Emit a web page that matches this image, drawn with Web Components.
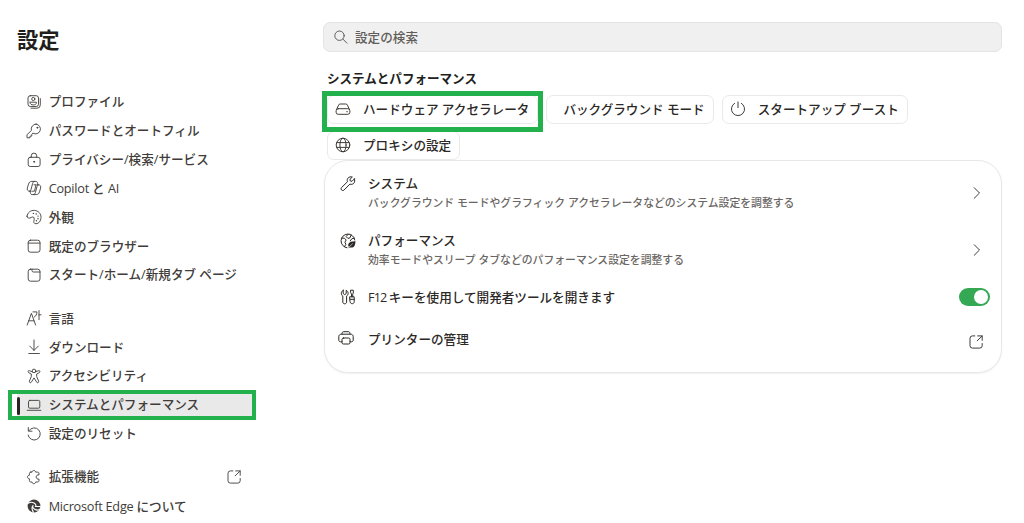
<!DOCTYPE html>
<html lang="ja">
<head>
<meta charset="utf-8">
<title>設定</title>
<style>
  body {
    margin: 0;
    width: 1024px;
    height: 523px;
    overflow: hidden;
    background: #fff;
    color: #2b2826;
    font-family: "Open Sans", "Noto Sans CJK JP", sans-serif;
    font-size: 12.6px;
    font-weight: 500;
  }
</style>
</head>
<body>
<settings-page>
  <settings-nav slot="nav" heading="設定">
    <nav-group>
      <nav-item icon="profile">プロファイル</nav-item>
      <nav-item icon="key">パスワードとオートフィル</nav-item>
      <nav-item icon="lock">プライバシー/検索/サービス</nav-item>
      <nav-item icon="copilot"><latin-text>Copilot</latin-text> と <latin-text>AI</latin-text></nav-item>
      <nav-item icon="palette">外観</nav-item>
      <nav-item icon="browser">既定のブラウザー</nav-item>
      <nav-item icon="tab">スタート/ホーム/新規タブ ページ</nav-item>
    </nav-group>
    <nav-group>
      <nav-item icon="language">言語</nav-item>
      <nav-item icon="download">ダウンロード</nav-item>
      <nav-item icon="access">アクセシビリティ</nav-item>
      <nav-item icon="laptop" selected>システムとパフォーマンス</nav-item>
      <nav-item icon="reset">設定のリセット</nav-item>
    </nav-group>
    <nav-group>
      <nav-item icon="puzzle" external>拡張機能</nav-item>
      <nav-item icon="edge"><latin-text>Microsoft Edge</latin-text> について</nav-item>
    </nav-group>
  </settings-nav>

  <search-box>設定の検索</search-box>
  <chip-list heading="システムとパフォーマンス">
    <link-chip icon="drive" marked>ハードウェア アクセラレータ</link-chip>
    <link-chip>バックグラウンド モード</link-chip>
    <link-chip icon="power">スタートアップ ブースト</link-chip>
    <link-chip icon="globe">プロキシの設定</link-chip>
  </chip-list>
  <settings-card>
    <setting-row icon="wrench" action="chevron">システム<span slot="desc">バックグラウンド モードやグラフィック アクセラレータなどのシステム設定を調整する</span></setting-row>
    <setting-row icon="performance" action="chevron">パフォーマンス<span slot="desc">効率モードやスリープ タブなどのパフォーマンス設定を調整する</span></setting-row>
    <setting-row class="toggle" icon="tools" action="toggle"><latin-text class="tight">F12</latin-text> キーを使用して開発者ツールを開きます</setting-row>
    <setting-row class="printer" icon="printer" action="open">プリンターの管理</setting-row>
  </settings-card>
</settings-page>

<script>
// 16x16 icons, stroked with currentColor
const ICONS = {
  profile: '<rect x="2" y="1.7" width="10.5" height="10.8" rx="2.3"/><circle cx="7.3" cy="5" r="1.6"/><path d="M4.1 8.2h6.3v.7c0 1.3-1.3 2-3.1 2s-3.2-.7-3.2-2zM14.3 4.6v6.3a3.3 3.3 0 0 1-3.3 3.3H5"/>',
  key: '<path d="M10.1 1.1a4.9 4.9 0 0 0-4.7 6.3L1 11.8v3h3v-1.7h1.8v-1.9l1.1-1.1a4.9 4.9 0 1 0 3.2-9z"/><circle cx="11.3" cy="4.7" r=".5" fill="currentColor"/>',
  lock: '<rect x="2.2" y="5.3" width="11.9" height="9.2" rx="2"/><path d="M5.3 5.2V3.8a2.7 2.7 0 0 1 5.4 0v1.4"/><circle cx="8.1" cy="9.8" r=".5" fill="currentColor"/>',
  copilot: '<path d="M5.2 11.2H3.7c-2 0-2.9-1.5-2.3-3.3l1.1-3.7C3 2.4 4 1.4 5.8 1.4h4.1c1.1 0 1.4.7 1.7 1.9l.3 1.5M10.8 4.8h1.5c2 0 2.9 1.5 2.3 3.3l-1.1 3.7c-.5 1.8-1.5 2.8-3.3 2.8H6.1c-1.1 0-1.4-.7-1.7-1.9l-.3-1.5M8.2 1.5c-1 .3-1.3 1-1.6 2L5 9.6c-.3 1-.5 1.6-1.5 1.6M7.8 14.5c1-.3 1.3-1 1.6-2L11 6.4c.3-1 .5-1.6 1.5-1.6M6.5 11.2h2L10 4.8H8"/>',
  palette: '<path d="M1 7.2C1.4 3.6 4.7 1.2 8.4 1.4c3.9.3 6.8 3.3 6.6 7-.2 3.6-2.1 6.3-5.1 6.3-2.2 0-2.4-1.7-1.9-3.3.4-1.7.4-3.3-1.2-3.4-1.1-.1-1.8.8-2.9 1C2.2 9.3.8 8.7 1 7.2z"/><g fill="currentColor" stroke="none"><circle cx="7.4" cy="4.4" r=".7"/><circle cx="10.2" cy="5" r=".7"/><circle cx="12" cy="7.1" r=".7"/><circle cx="12" cy="9.7" r=".7"/><circle cx="10.4" cy="11.8" r=".7"/></g>',
  browser: '<rect x="2.2" y="2.2" width="11.8" height="12" rx="2.3"/><path d="M2.2 5.1H14"/>',
  tab: '<rect x="2.2" y="2.2" width="11.8" height="12" rx="2.3"/><path d="M6 2.2v1.4c0 .9.5 1.4 1.4 1.4H14"/>',
  language: '<path d="M1.2 15L5.4 3.3 9.6 15M2.8 10.8h5.1M7 1.9h3.9c0 2.4-.9 4.1-2.6 5.2M13 .6v9M13 4.8h2"/>',
  download: '<path d="M8 1v10.3M3.7 7.1L8 11.4l4.3-4.3M2.8 14.5h10.6"/>',
  access: '<circle cx="8" cy="2.9" r="1.8"/><path d="M6.2 3.9L3.6 2.7C2.1 2.1 1.3 4 2.7 4.7l2.6 1.3v2.6l-1.9 4.5c-.6 1.5 1.4 2.2 2 1L8 9.9l2.6 4.2c.6 1.2 2.6.5 2-1l-1.9-4.5V6l2.6-1.3c1.4-.7.6-2.6-.9-2L9.8 3.9"/>',
  laptop: '<rect x="2.5" y="3.4" width="11.3" height="7.8" rx="1.3"/><path d="M1.2 13.3h13.6"/>',
  reset: '<path d="M3 4.6A6.1 6.1 0 1 1 2.1 9M2.3 1.5v3.7H6"/>',
  puzzle: '<path d="M4.9 3.1h1.2c.2-1.1.8-1.6 1.7-1.6s1.6.5 1.8 1.6h1.9c1 0 1.5.5 1.5 1.5v1.3c-1.7-.3-2.8.7-2.8 2.1s1.1 2.4 2.8 2.1v1.4c0 1-.5 1.5-1.5 1.5H9.6c-.2 1.2-.9 1.7-1.8 1.7s-1.5-.5-1.7-1.7H4.9c-1 0-1.5-.5-1.5-1.5V9.8C2.2 9.6 1.5 9 1.5 8s.7-1.6 1.9-1.8V4.6c0-1 .5-1.5 1.5-1.5z"/>',
  edge: '<circle cx="8" cy="8" r="6.4" fill="currentColor" stroke="none"/><path d="M1.2 5.9c1.9-1.7 4.7-2 6.8-.9 2 1 2.4 2.7 1.4 3.5h5.2M14.8 10.6c-1.8 1.6-4.5 1.7-6.2.6-1.8-1.1-2.1-2.6-1.6-3.6M6.8 8.2c-1.1.6-1.2 3.3.7 6" stroke="#fff" stroke-width="1.1"/>',
  search: '<circle cx="6.5" cy="6.7" r="4.7"/><path d="M10 10.2l4 4"/>',
  drive: '<path d="M1.6 8.4l2-4.3c.3-.8.8-1.1 1.6-1.1h5.6c.8 0 1.3.3 1.6 1.1l2 4.3"/><rect x="1.1" y="7.7" width="13.8" height="5.6" rx="2.1"/><path d="M11.7 10.7h.6"/>',
  power: '<path d="M8 .9v5.7M4.6 2.3a6.6 6.6 0 1 0 6.8 0"/>',
  globe: '<circle cx="8" cy="8" r="6.8"/><ellipse cx="8" cy="8" rx="3.1" ry="6.8"/><path d="M1.8 5.6h12.4M1.8 10.4h12.4"/>',
  wrench: '<path d="M14.4 2.9L12 5.3l-1.7-.3-.4-1.6 2.4-2.4c-3.2-.9-6 1.5-4.8 4.7L1.6 11.5c-1.7 1.6.8 4.2 2.5 2.5l5.8-5.9c3.4 1.2 5.9-2 4.5-5.2z"/>',
  performance: '<path d="M7 14.8A6.9 6.9 0 1 1 14.8 7M1.8 5.2h2.6L6.2 7 4.9 9.3l1 2-1.4 2.3M8.2 1.2L6.1 3.6l1.8 1.8 2-.5 1.2-2.9M14.2 5.2l-2.3.5-1.6 2.1"/><path d="M15.5 8.2c-3.1-.1-6.4.4-7.1 2.7-.5 1.6.1 2.4.7 3l-.9 1.3 1.5-.8c4.1 1 5.6-1.8 5.8-6.2z" fill="currentColor" stroke="none"/><path d="M9.3 13.8l3.2-3" stroke="#fff" stroke-width=".6"/>',
  tools: '<path d="M3.2 1.3v3.3l1.5 1 1.5-1V1.3c2.6 1.3 2.4 4.6.4 5.8v5.9c0 2.4-3.8 2.4-3.8 0V7.1C.8 5.9.6 2.6 3.2 1.3zM10.9 1.2h2.4v2.9l-.6 1v2.7h-1.2V5.1l-.6-1zM10 7.8h4.2v5c0 2.6-4.2 2.6-4.2 0zM10 10.3h4.2"/>',
  printer: '<path d="M4 4.2v-.6c0-1.1.6-1.9 1.7-1.9h4.6c1.1 0 1.7.8 1.7 1.9v.6M4 11.8H2.6c-1 0-1.8-.7-1.8-1.7V6.6c0-1.4 1-2.4 2.5-2.4h9.4c1.5 0 2.5 1 2.5 2.4v3.5c0 1-.8 1.7-1.8 1.7H12"/><rect x="4" y="8" width="8" height="6" rx="1.4"/>',
  open: '<path d="M6.8 1.9H4.4A2.4 2.4 0 0 0 2 4.3v7.4a2.4 2.4 0 0 0 2.4 2.4h7.4a2.4 2.4 0 0 0 2.4-2.4V9.5M9.7 1.9h4.5v4.4M14.2 1.9L9.2 6.8"/>',
  chevron: '<path d="M6.2 2.7L11.5 8l-5.3 5.3"/>'
};

function icon(name) {
  return `<svg width="16" height="16" viewBox="0 0 16 16" fill="none" stroke="currentColor" stroke-linecap="round" stroke-linejoin="round">${ICONS[name] || ''}</svg>`;
}

function define(name, render) {
  customElements.define(name, class extends HTMLElement {
    constructor() {
      super();
      this.attachShadow({ mode: 'open' });
      this.shadowRoot.innerHTML = render(this);
    }
  });
}

define('latin-text', () => `
  <style>
    :host { font-size: 12.7px; font-weight: 400; letter-spacing: -0.24px; }
    :host(.tight) { letter-spacing: -0.9px; }
  </style>
  <slot></slot>
`);

define('settings-page', () => `
  <style>
    :host { display: grid; grid-template-columns: 323px 679px; height: 523px; }
    main { display: flex; flex-direction: column; padding-top: 22px; }
  </style>
  <slot name="nav"></slot>
  <main><slot></slot></main>
`);

define('settings-nav', el => `
  <style>
    :host { display: block; padding: 26px 0 0 13px; }
    h1 { margin: 0 0 33.4px 4px; font-size: 21.3px; line-height: 28px; font-weight: 700; color: #211e1c; }
    nav { display: flex; flex-direction: column; gap: 14.4px; }
  </style>
  <h1>${el.getAttribute('heading')}</h1>
  <nav><slot></slot></nav>
`);

define('nav-group', () => `
  <style>
    :host { display: flex; flex-direction: column; }
  </style>
  <slot></slot>
`);

define('nav-item', el => `
  <style>
    :host {
      position: relative;
      display: flex;
      align-items: center;
      box-sizing: border-box;
      width: 239px;
      height: 28.88px;
      padding: 0 10.5px 0 13px;
      color: #403c39;
      white-space: nowrap;
    }
    :host([selected]) {
      background: linear-gradient(#e9e9e9, #e9e9e9) 4px 0 / 100% 100% no-repeat;
    }
    svg { flex: none; margin-right: 6.7px; stroke-width: 0.9; }
    .label { flex: 1; padding-top: 0.6px; line-height: 20px; }
    .external { margin-right: 0; }
    .bar { position: absolute; left: 4px; top: 6px; width: 3px; height: 18px; border-radius: 2px; background: #292321; }
    .mark { position: absolute; inset: -1px -4px -0.5px -5px; border: 4px solid #22b14c; }
  </style>
  ${icon(el.getAttribute('icon'))}
  <span class="label"><slot></slot></span>
  ${el.hasAttribute('external') ? icon('open').replace('<svg', '<svg class="external"') : ''}
  ${el.hasAttribute('selected') ? '<span class="bar"></span><span class="mark"></span>' : ''}
`);

define('search-box', () => `
  <style>
    :host {
      display: flex;
      align-items: center;
      gap: 6px;
      box-sizing: border-box;
      height: 30px;
      padding-left: 9px;
      border: 1.5px solid #e4e4e4;
      border-radius: 7px;
      background: #f0f0f0;
      color: #605d5a;
    }
    span { padding-bottom: 2px; }
  </style>
  ${icon('search')}
  <span><slot></slot></span>
`);

define('chip-list', el => `
  <style>
    :host { display: block; padding: 17px 0 0 4px; }
    h2 { margin: 0 0 6px; font-size: 12.55px; line-height: 20px; font-weight: 700; color: #211e1c; }
    div { display: flex; flex-wrap: wrap; gap: 7px 8px; width: 600px; }
  </style>
  <h2>${el.getAttribute('heading')}</h2>
  <div><slot></slot></div>
`);

define('link-chip', el => `
  <style>
    :host {
      position: relative;
      display: flex;
      align-items: center;
      box-sizing: border-box;
      height: 29px;
      padding: 0 8px 0 7px;
      border: 1px solid #e9e9e9;
      border-radius: 7px;
      white-space: nowrap;
    }
    svg { flex: none; margin-right: 12px; padding-bottom: 1px; color: #403c39; }
    .none { width: 9px; }
    .label { padding-bottom: 2px; }
    .mark { position: absolute; z-index: 1; inset: -5px -6px -9px -6px; border: 5px solid #22b14c; }
  </style>
  ${el.hasAttribute('icon') ? icon(el.getAttribute('icon')) : '<span class="none"></span>'}
  <span class="label"><slot></slot></span>
  ${el.hasAttribute('marked') ? '<span class="mark"></span>' : ''}
`);

define('settings-card', () => `
  <style>
    :host {
      display: block;
      box-sizing: border-box;
      height: 213px;
      margin-left: 1px;
      padding: 3px 9px 0 14px;
      border: 1.5px solid #e8e8e8;
      border-radius: 24px;
      background: #fff;
      box-shadow: 0 1px 2px #0000000f;
    }
    ::slotted(.toggle) { height: 38px; }
    ::slotted(.printer) { height: 50px; }
  </style>
  <slot></slot>
`);

define('setting-row', el => {
  const action = el.getAttribute('action');
  const twoLine = el.querySelector('[slot="desc"]');
  const printer = el.getAttribute('icon') === 'printer';
  return `
  <style>
    :host { display: flex; align-items: center; height: 57px; }
    .icon { display: flex; margin: 0 12px 0 1px; ${twoLine ? 'padding-bottom: 17px;' : ''} ${printer ? 'margin: 0 14px 0 -1px; padding-bottom: 7px;' : ''} }
    .text { flex: 1; line-height: 20px; ${printer ? 'padding-bottom: 3px;' : ''} }
    .desc { font-size: 10.83px; line-height: 17px; color: #6a6663; }
    .action { display: flex; justify-content: center; width: 33px; color: #403c39; ${printer ? 'padding-top: 2px;' : ''} }
    .toggle { display: flex; justify-content: flex-end; box-sizing: border-box; width: 33px; height: 18px; margin-right: 2px; padding: 2px; border-radius: 9px; background: #34a853; }
    .knob { width: 14px; height: 14px; border-radius: 50%; background: #fff; }
  </style>
  <span class="icon">${icon(el.getAttribute('icon'))}</span>
  <div class="text">
    <div><slot></slot></div>
    ${twoLine ? '<div class="desc"><slot name="desc"></slot></div>' : ''}
  </div>
  <span class="action">${action === 'toggle' ? '<span class="toggle"><span class="knob"></span></span>' : icon(action)}</span>
`;
});
</script>
</body>
</html>
